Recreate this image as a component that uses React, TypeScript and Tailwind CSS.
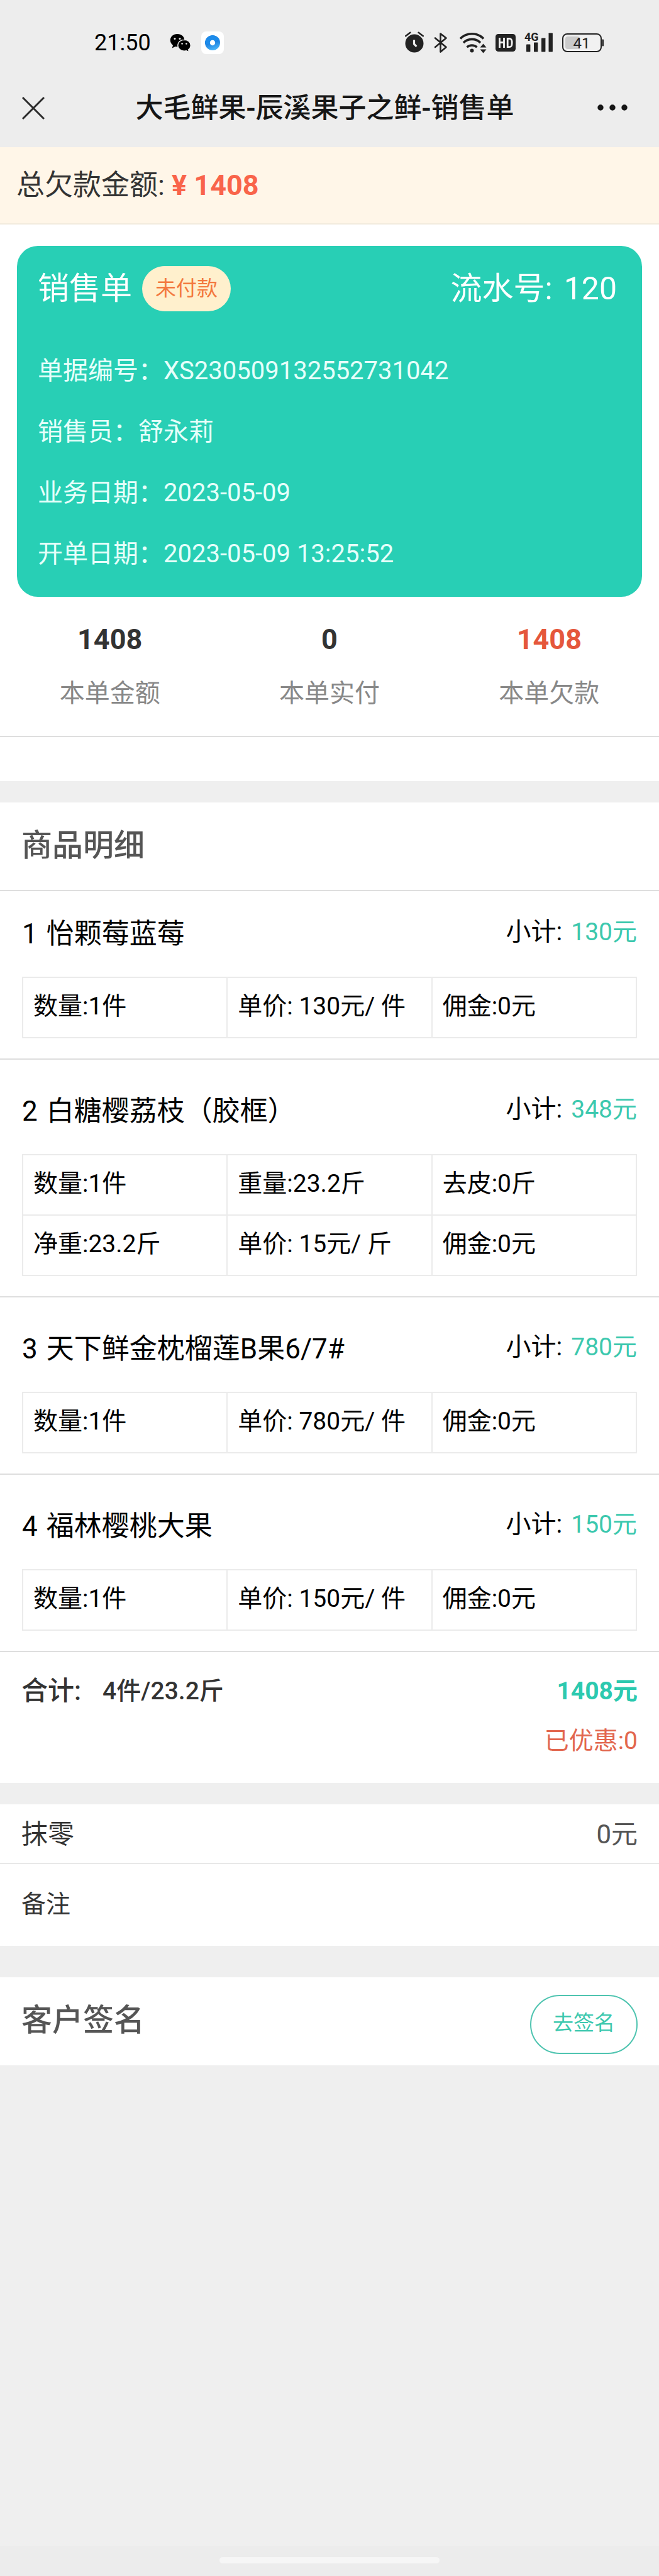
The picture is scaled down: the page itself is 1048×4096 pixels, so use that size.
import type { ReactNode } from "react";

type Item = {
  name: string;
  subtotal: string;
  rows: string[][];
};

const items: Item[] = [
  {
    name: "怡颗莓蓝莓",
    subtotal: "130元",
    rows: [["数量:1件", "单价: 130元/ 件", "佣金:0元"]],
  },
  {
    name: "白糖樱荔枝（胶框）",
    subtotal: "348元",
    rows: [
      ["数量:1件", "重量:23.2斤", "去皮:0斤"],
      ["净重:23.2斤", "单价: 15元/ 斤", "佣金:0元"],
    ],
  },
  {
    name: "天下鲜金枕榴莲B果6/7#",
    subtotal: "780元",
    rows: [["数量:1件", "单价: 780元/ 件", "佣金:0元"]],
  },
  {
    name: "福林樱桃大果",
    subtotal: "150元",
    rows: [["数量:1件", "单价: 150元/ 件", "佣金:0元"]],
  },
];

const orderInfo = [
  ["单据编号：", "XS230509132552731042"],
  ["销售员：", "舒永莉"],
  ["业务日期：", "2023-05-09"],
  ["开单日期：", "2023-05-09 13:25:52"],
];

const stats = [
  { value: "1408", label: "本单金额", color: "text-[#333333]" },
  { value: "0", label: "本单实付", color: "text-[#333333]" },
  { value: "1408", label: "本单欠款", color: "text-[#e5573c]" },
];

function WechatIcon() {
  return (
    <svg width="34" height="30" viewBox="0 0 34 30" aria-hidden="true">
      <path
        d="M12 1C5.600 1 .8 5.200.8 11c0 3.300 1.700 6 4.200 7.900L3.800 23.400l5-2.500c1 .25 2 .4 3.200.4 6.400 0 11.300-4.400 11.300-10.200C23.300 5.300 18.400 1 12 1z"
        fill="#000"
      />
      <path
        d="M23 10.200c-5.700 0-10.200 3.900-10.200 9s4.500 9 10.200 9c1.200 0 2.300-.2 3.400-.5l4.200 2-1-3.700c2.200-1.700 3.600-4.100 3.600-6.800 0-5.100-4.500-9-10.200-9z"
        fill="#000"
        stroke="#ededed"
        strokeWidth="1.400"
      />
      <circle cx="8" cy="8.500" r="1.500" fill="#ededed" />
      <circle cx="16" cy="8.500" r="1.500" fill="#ededed" />
      <circle cx="19.600" cy="16.500" r="1.300" fill="#ededed" />
      <circle cx="26.400" cy="16.500" r="1.300" fill="#ededed" />
    </svg>
  );
}

function BrowserIcon() {
  return (
    <svg width="36" height="36" viewBox="0 0 36 36" aria-hidden="true">
      <defs>
        <linearGradient id="ring" x1="0" y1="0" x2="0.300" y2="1">
          <stop offset="0" stopColor="#1b86e6" />
          <stop offset="0.500" stopColor="#1479dc" />
          <stop offset="1" stopColor="#45aef5" />
        </linearGradient>
      </defs>
      <rect width="36" height="36" rx="8" fill="#fff" />
      <circle cx="18" cy="18" r="12" fill="url(#ring)" />
      <path d="M6.200 19.500c5 1.800 8.500.8 12-1.500s7-4.500 11.300-3.500A12 12 0 0 0 6.200 19.500z" fill="#1c8bea" />
      <circle cx="18" cy="18" r="4.200" fill="#fff" />
    </svg>
  );
}

function AlarmIcon() {
  return (
    <svg width="30" height="36" viewBox="0 0 30 36" aria-hidden="true">
      <circle cx="15" cy="19" r="14.500" fill="#222" />
      <path d="M1.200 7.200 8.400 1.800M28.800 7.200 21.600 1.800" stroke="#ededed" strokeWidth="6" />
      <path d="M1.200 7.200 8.400 1.800M28.800 7.200 21.600 1.800" stroke="#222" strokeWidth="2.600" strokeLinecap="round" />
      <path d="M14.500 13.500v6.300l3.800 4.200" stroke="#ededed" strokeWidth="3.200" fill="none" />
    </svg>
  );
}

function BluetoothIcon() {
  return (
    <svg width="26" height="36" viewBox="0 0 26 36" aria-hidden="true">
      <path
        d="M4 10.500 21.500 25 12.500 32.500V3.500L21.500 10.500 4 25"
        fill="none"
        stroke="#222"
        strokeWidth="2.600"
        strokeLinejoin="round"
        strokeLinecap="round"
      />
    </svg>
  );
}

function WifiIcon() {
  return (
    <svg width="46" height="36" viewBox="0 0 46 36" aria-hidden="true">
      <g fill="none" stroke="#222" strokeWidth="3.600">
        <path d="M4 11.500a26 26 0 0 1 37 0" />
        <path d="M9 18a19 19 0 0 1 27 0" />
        <path d="M14.500 25a12 12 0 0 1 16 0" />
      </g>
      <circle cx="22.500" cy="30.500" r="3" fill="#222" />
      <path d="M35.500 25.500h10l-5-6zM35.500 28.500h10l-5 6z" fill="#222" />
    </svg>
  );
}

function HdIcon() {
  return (
    <svg width="32" height="36" viewBox="0 0 32 36" aria-hidden="true">
      <rect y="4" width="32" height="28" rx="4.500" fill="#222" />
      <path d="M6.500 10v16M13.500 10v16M6.500 17.500h7" stroke="#f3f3f3" strokeWidth="2.800" fill="none" />
      <path
        d="M19.200 11.300h2.600c3.200 0 4.400 1.800 4.400 6.700s-1.200 6.700-4.400 6.700h-2.600z"
        stroke="#f3f3f3"
        strokeWidth="2.800"
        fill="none"
      />
    </svg>
  );
}

function SignalIcon() {
  return (
    <svg width="46" height="48" viewBox="0 -6 46 48" aria-hidden="true">
      <text x="0" y="15" fontFamily="Roboto" fontSize="18" fontWeight="700" fill="#222">
        4G
      </text>
      <g fill="#222">
        <rect x="3" y="20.500" width="6.400" height="12" rx="0.800" />
        <rect x="15" y="17.500" width="6.400" height="15" rx="0.800" />
        <rect x="27" y="10.500" width="6.400" height="22" rx="0.800" />
        <rect x="38.500" y="2.500" width="6.400" height="30" rx="0.800" />
      </g>
    </svg>
  );
}

function BatteryIcon() {
  return (
    <svg width="66" height="36" viewBox="0 0 66 36" aria-hidden="true">
      <rect x="1" y="4" width="61" height="28" rx="7" fill="#f1f1f1" stroke="#222" strokeWidth="2" />
      <rect x="5" y="8" width="23" height="20" rx="4" fill="#cbcbcb" />
      <rect x="63.500" y="12.500" width="2.500" height="11" rx="1" fill="#222" />
      <text x="31" y="26.500" textAnchor="middle" fontFamily="Roboto" fontSize="24" fill="#222">
        41
      </text>
    </svg>
  );
}

function Section({ children }: { children: ReactNode }) {
  return <section className="bg-white">{children}</section>;
}

function ItemBlock({ item, index }: { item: Item; index: number }) {
  return (
    <article className={`border-b-2 border-[#dedede] px-[35px] pb-8 ${index === 0 ? "pt-[38px]" : "pt-[52px]"}`}>
      <div className="flex items-start justify-between pb-[38px] text-black">
        <h3 className="flex gap-[14px] text-[44px] leading-[60px]">
          <span>{index + 1}</span>
          <span>{item.name}</span>
        </h3>
        <p className="flex gap-[14px] text-[39px] leading-[54px]">
          <span className="text-[40px]">小计:</span>
          <span className="text-[#3cc8ae]">{item.subtotal}</span>
        </p>
      </div>
      <table className="w-full table-fixed border-collapse text-[39px] leading-[54px] text-black">
        <tbody>
          {item.rows.map((row, r) => (
            <tr key={r}>
              {row.map((cell) => (
                <td key={cell} className="h-24 border-2 border-[#ebebeb] px-4 pb-1 whitespace-nowrap">
                  {cell}
                </td>
              ))}
            </tr>
          ))}
        </tbody>
      </table>
    </article>
  );
}

export default function App() {
  return (
    <div className="flex min-h-screen flex-col bg-[#efefef] font-[Roboto,'Noto_Sans_CJK_SC',sans-serif] text-[#333333]">
      <header className="bg-[#ededed] pb-[26px]">
        <div className="flex h-[136px] items-center justify-between pr-[88px] pl-[150px]">
          <div className="flex items-center">
            <span className="text-[36px] leading-[40px] text-black">21:50</span>
            <span className="ml-[30px]">
              <WechatIcon />
            </span>
            <span className="ml-4">
              <BrowserIcon />
            </span>
          </div>
          <div className="flex items-center gap-[14px]">
            <AlarmIcon />
            <BluetoothIcon />
            <WifiIcon />
            <HdIcon />
            <SignalIcon />
            <BatteryIcon />
          </div>
        </div>
        <div className="flex h-[72px] items-center pr-[50px] pl-[35px]">
          <button type="button" aria-label="关闭" className="mr-3">
            <svg width="36" height="36" viewBox="0 0 36 36" aria-hidden="true">
              <path d="M1 1l34 34M35 1 1 35" stroke="#2c2c2c" strokeWidth="3" />
            </svg>
          </button>
          <h1 className="flex-1 text-center text-[44px] leading-[60px] font-medium whitespace-nowrap text-[#161616]">
            大毛鲜果-辰溪果子之鲜-销售单
          </h1>
          <button type="button" aria-label="更多">
            <svg width="48" height="36" viewBox="0 0 48 36" aria-hidden="true">
              <g fill="#161616">
                <circle cx="5" cy="17" r="4.700" />
                <circle cx="24" cy="17" r="4.700" />
                <circle cx="43" cy="17" r="4.700" />
              </g>
            </svg>
          </button>
        </div>
      </header>

      <div className="border-b-2 border-[#f2ebdd] bg-[#fff6e8] px-[26px] pt-[31px] pb-[30px] text-[45px] leading-[60px]">
        总欠款金额: <strong className="font-bold text-[#f9644a]">¥ 1408</strong>
      </div>

      <Section>
        <div className="px-[27px] pt-[34px]">
          <div className="rounded-[33px] bg-[#28cfb5] pt-8 pr-10 pb-5 pl-[33px]">
            <div className="flex h-[72px] items-center text-[50px] leading-[60px] text-white">
              <h2>销售单</h2>
              <span className="ml-4 flex h-[72px] items-center rounded-full bg-[#fff0cd] px-[21px] text-[33px] text-[#f3793f]">
                未付款
              </span>
              <p className="ml-auto flex gap-[18px]">
                <span>流水号:</span>
                <span>120</span>
              </p>
            </div>
            <dl className="pt-[46px] text-[40px] leading-[97px] text-[#e6fffa]">
              {orderInfo.map(([label, value]) => (
                <div key={label} className="flex">
                  <dt>{label}</dt>
                  <dd>{value}</dd>
                </div>
              ))}
            </dl>
          </div>
        </div>
        <dl className="grid grid-cols-3 border-b-2 border-[#dedede] pt-[38px] pb-[37px] text-center">
          {stats.map((s) => (
            <div key={s.label} className="flex flex-col-reverse">
              <dt className="pt-[26px] text-[40px] leading-[60px] text-[#888888]">{s.label}</dt>
              <dd className={`text-[45px] leading-[60px] font-bold ${s.color}`}>{s.value}</dd>
            </div>
          ))}
        </dl>
        <div className="h-[70px]" />
      </Section>

      <main className="mt-[34px]">
        <Section>
          <h2 className="border-b-2 border-[#dedede] px-[34px] pt-[39px] pb-[40px] text-[49px] leading-[60px] font-medium text-[#555555]">
            商品明细
          </h2>
          {items.map((item, i) => (
            <ItemBlock key={item.name} item={item} index={i} />
          ))}
          <div className="px-[34px] pt-[34px] pb-[39px] text-[39px] leading-[56px]">
            <div className="flex items-center font-medium">
              <span className="text-[42px]">合计:</span>
              <span className="ml-[34px]">4件/23.2斤</span>
              <span className="ml-auto font-bold text-[#2cc9af]">1408元</span>
            </div>
            <p className="pt-[23px] text-right text-[#e2674f]">已优惠:0</p>
          </div>
        </Section>

        <div className="mt-[34px]">
          <Section>
            <div className="flex items-center justify-between border-b-2 border-[#e8e8e8] px-[34px] pt-[18px] pb-[15px] text-[42px] leading-[60px]">
              <span>抹零</span>
              <span className="text-[#555555]">0元</span>
            </div>
            <div className="px-[34px] pt-[34px] pb-[36px] text-[39px] leading-[60px]">备注</div>
          </Section>
        </div>

        <div className="mt-[50px]">
          <Section>
            <div className="flex items-center justify-between px-[34px] pt-[28px] pb-[18px]">
              <h2 className="pb-3 text-[49px] leading-[60px] font-medium text-[#555555]">客户签名</h2>
              <button
                type="button"
                className="rounded-full border-2 border-[#4fc4b0] px-[34px] pt-[18px] pb-[22px] text-[33px] leading-[50px] text-[#3cc8ae]"
              >
                去签名
              </button>
            </div>
          </Section>
        </div>
      </main>

      <footer className="mt-auto flex justify-center bg-[#ececec] pt-[18px] pb-5">
        <div className="h-[10px] w-1/3 rounded-full bg-[#f6f6f6]" />
      </footer>
    </div>
  );
}
